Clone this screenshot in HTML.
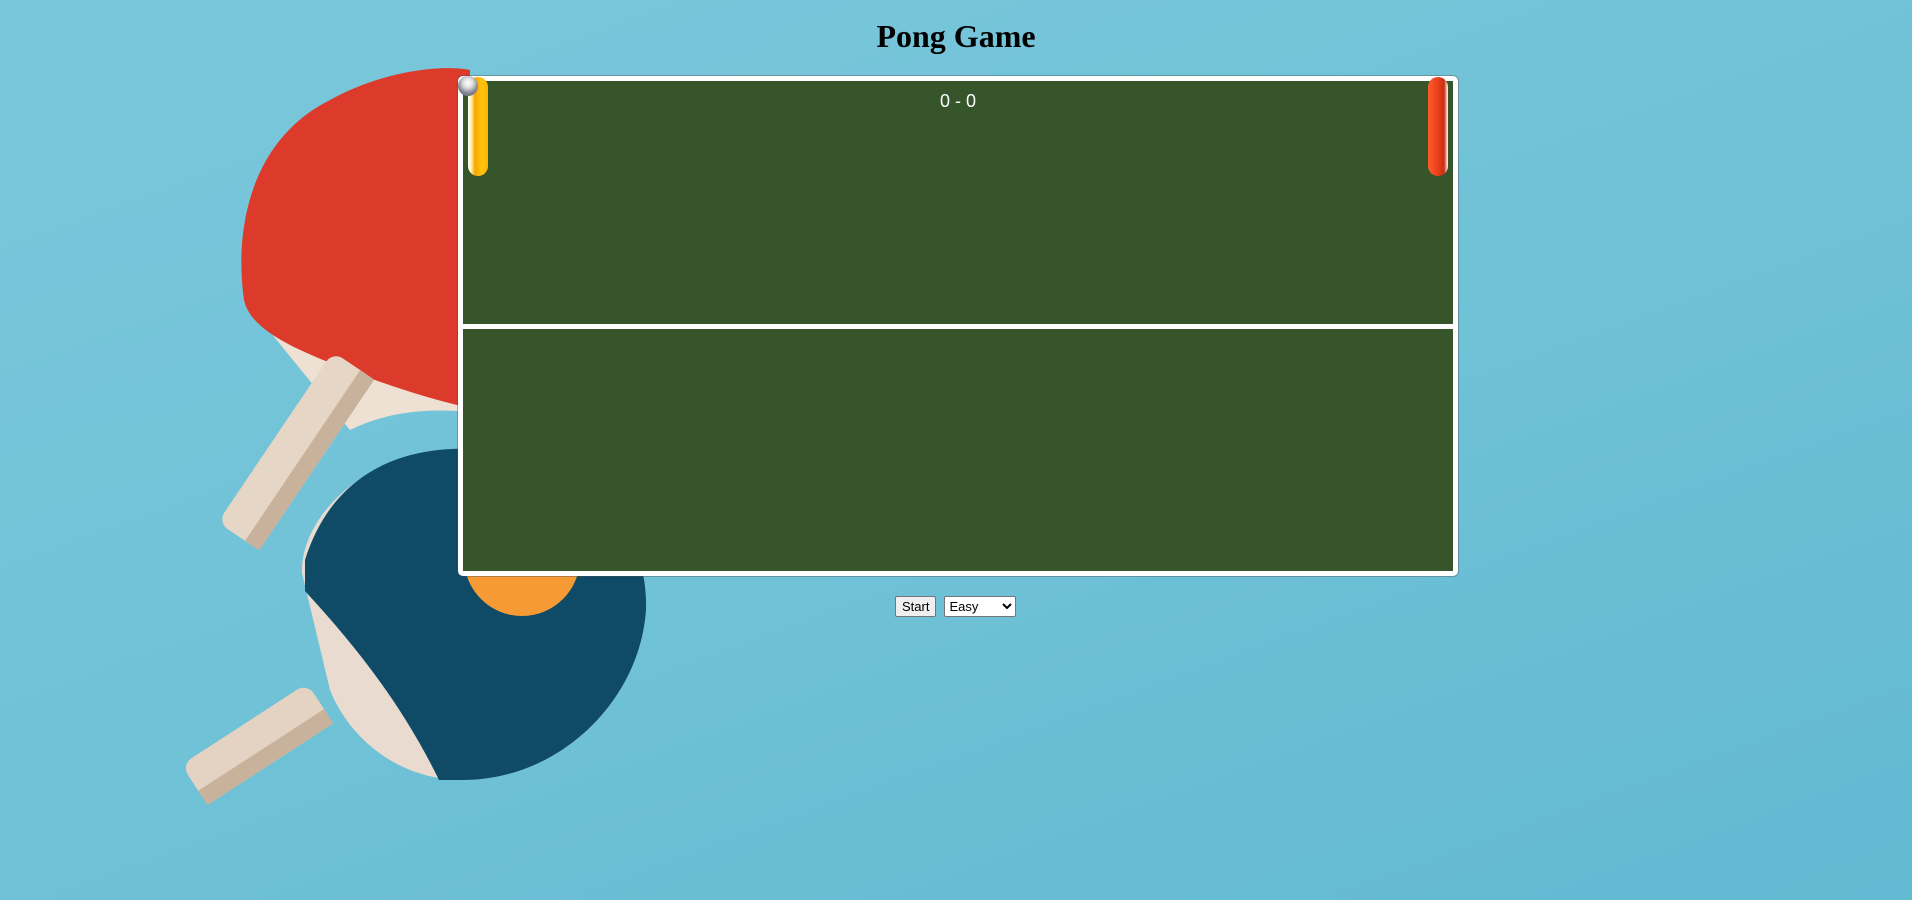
<!DOCTYPE html>
<html><head><meta charset="utf-8"><style>
html,body{margin:0;padding:0;width:1912px;height:900px;overflow:hidden}
body{background:linear-gradient(160deg,#7ac7db 0%,#70c2d7 50%,#62b9d1 100%);font-family:"Liberation Serif",serif;position:relative}
h1{position:absolute;top:18px;left:0;width:1912px;text-align:center;margin:0;font-size:32px;font-weight:bold;color:#000}
#board{position:absolute;left:458px;top:76px;width:990px;height:490px;border:5px solid #fff;border-radius:5px;background:#36552a;box-shadow:0 0 0 1px rgba(80,80,80,.4)}
#net{position:absolute;left:0;right:0;top:243px;height:5px;background:#fff}
#score{position:absolute;top:10px;left:0;right:0;text-align:center;color:#fff;font:18px "Liberation Sans",sans-serif}
.pad{position:absolute;width:20px;height:99px;border-radius:10px;top:-4px}
#lp{left:5px;background:linear-gradient(90deg,#fff 0,#fff3b0 15%,#f7a700 35%,#ffc40c 70%,#ffb300 100%)}
#rp{left:965px;background:linear-gradient(90deg,#ff5a2a 0,#e8401c 50%,#c92f12 80%,#fff 100%)}
#ball{position:absolute;left:458px;top:76px;width:20px;height:20px;border-radius:50%;background:radial-gradient(circle at 50% 35%,#fff 0,#ddd 30%,#889 60%,#556 100%)}
#ctrl{position:absolute;top:596px;left:895px;font:13px "Liberation Sans",sans-serif}
button{font:13px "Liberation Sans",sans-serif;height:21px;padding:0 6px;border:1px solid #767676;background:#efefef;border-radius:2px}
select{font:13px "Liberation Sans",sans-serif;height:21px;width:72px;margin-left:8px;border:1px solid #767676;border-radius:2px;background:#fff}
svg{position:absolute;left:0;top:0}
</style></head><body>
<svg width="1912" height="900">
 <!-- red paddle -->
 <path d="M244 300 L350 430 Q400 405 470 412 L470 300 Z" fill="#efe0d4"/>
 <path d="M244 300 C234 230 250 140 330 100 C380 72 440 64 470 70 L470 408 C410 395 330 365 290 345 C265 332 248 318 244 300Z" fill="#dc3a2b"/>
 <g transform="rotate(34 296 451)"><rect x="271" y="348" width="50" height="206" rx="12" fill="#e6d6c5"/><rect x="304" y="348" width="17" height="206" fill="#c9b29c"/></g>
 <!-- blue paddle -->
 <path d="M302 573 C300 520 360 455 451 449 C540 445 650 500 646 610 C640 700 560 780 463 780 C400 780 350 740 330 690 Z" fill="#eadbd0"/>
 <path d="M305 560 C330 480 390 452 451 449 C540 445 650 500 646 610 C640 700 560 780 463 780 L439 780 C400 700 350 640 305 591Z" fill="#0f4a66"/>
 <g transform="rotate(57 259 743)"><rect x="235" y="670" width="48" height="150" rx="12" fill="#e4d3c2"/><rect x="266" y="670" width="17" height="150" fill="#c9b29c"/></g>
 <circle cx="522" cy="558" r="58" fill="#f59a35"/>
</svg>
<h1>Pong Game</h1>
<div id="board"><div id="net"></div><div id="score">0 - 0</div><div class="pad" id="lp"></div><div class="pad" id="rp"></div></div>
<div id="ball"></div>
<div id="ctrl"><button>Start</button><select><option>Easy</option></select></div>
</body></html>
